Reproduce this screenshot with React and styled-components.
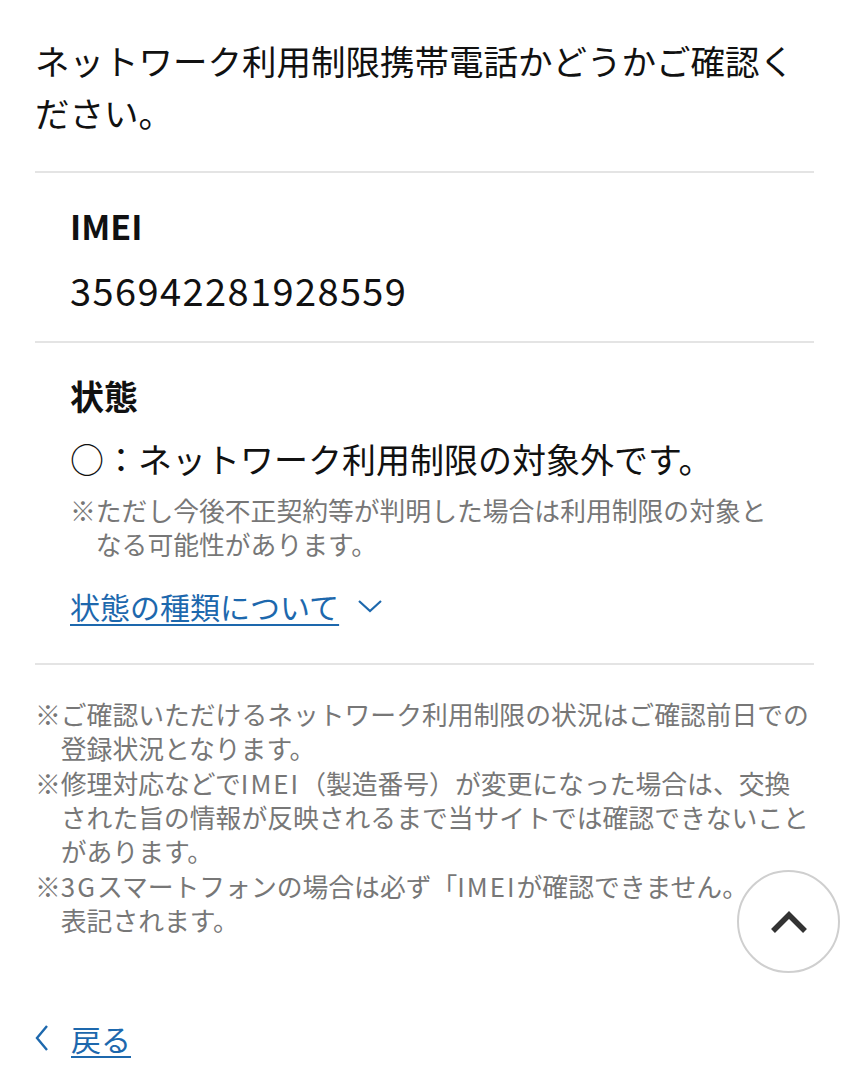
import React from "react";
import styled, { createGlobalStyle } from "styled-components";

const GlobalStyle = createGlobalStyle`
  body {
    margin: 0;
    background: #fff;
    font-family: "Noto Sans CJK JP", "Noto Sans", sans-serif;
    color: #111;
  }
`;

const Page = styled.div`
  padding: 0 35px 60px;
`;

const Intro = styled.p`
  margin: 0;
  padding: 34px 0 33px;
  font-size: 34.5px;
  line-height: 52px;
  border-bottom: 2px solid #e4e4e4;
`;

const Section = styled.section`
  padding: ${(p) => p.$pad || "28px 35px 26px"};
  border-bottom: 2px solid #e4e4e4;
`;

const Label = styled.h2`
  margin: 0;
  font-size: 34px;
  line-height: 50px;
  font-weight: 700;
`;

const Value = styled.div`
  margin-top: ${(p) => p.$gap || "14px"};
  font-size: ${(p) => p.$size || "34px"};
  line-height: 50px;
  letter-spacing: ${(p) => p.$spacing || "0"};
`;

const Note = styled.p`
  margin: ${(p) => p.$margin || "0"};
  padding-left: 1em;
  text-indent: -1em;
  font-size: 25.8px;
  line-height: 34.4px;
  color: #777;
`;

const Latin = styled.span`
  letter-spacing: 2px;
`;

const LinkRow = styled.div`
  margin-top: ${(p) => p.$gap || "0"};
  display: flex;
  align-items: center;
  gap: ${(p) => p.$iconGap || "18px"};
  height: 44px;
  color: #1d68ad;
  font-size: 30px;
`;

const TextLink = styled.a`
  color: inherit;
  text-decoration: underline;
  text-decoration-thickness: 2px;
  text-underline-offset: 5px;
  line-height: 44px;
`;

const Notes = styled.div`
  padding-top: 32px;
`;

const BackRow = styled(LinkRow)`
  margin-top: 78px;
`;

const TopButton = styled.button`
  position: fixed;
  right: 9px;
  bottom: 107px;
  width: 103px;
  height: 103px;
  border-radius: 50%;
  border: 2px solid #cfcfcf;
  background: #fff;
  display: flex;
  align-items: center;
  justify-content: center;
  padding: 0;
  cursor: pointer;
`;

function ChevronDown() {
  return (
    <svg width="26" height="16" viewBox="0 0 26 16" fill="none">
      <path d="M2 3 L13 13 L24 3" stroke="#1d68ad" strokeWidth="2.2" />
    </svg>
  );
}

function ChevronLeft() {
  return (
    <svg width="14" height="28" viewBox="0 0 14 28" fill="none">
      <path d="M12 2 L2 14 L12 26" stroke="#1d68ad" strokeWidth="2.4" />
    </svg>
  );
}

function ChevronUp() {
  return (
    <svg width="40" height="26" viewBox="0 0 40 26" fill="none">
      <path d="M4 22 L20 6 L36 22" stroke="#333" strokeWidth="5.5" />
    </svg>
  );
}

export default function App() {
  return (
    <>
      <GlobalStyle />
      <Page>
        <Intro>ネットワーク利用制限携帯電話かどうかご確認ください。</Intro>

        <Section>
          <Label>IMEI</Label>
          <Value $size="38px" $spacing="1.4px">356942281928559</Value>
        </Section>

        <Section $pad="28px 35px 35px">
          <Label>状態</Label>
          <Value $gap="13px">○：ネットワーク利用制限の対象外です。</Value>
          <Note $margin="9px 0 0">
            ※ただし今後不正契約等が判明した場合は利用制限の対象となる可能性があります。
          </Note>
          <LinkRow $gap="22px">
            <TextLink href="#">状態の種類について</TextLink>
            <ChevronDown />
          </LinkRow>
        </Section>

        <Notes>
          <Note>※ご確認いただけるネットワーク利用制限の状況はご確認前日での登録状況となります。</Note>
          <Note>
            ※修理対応などで<Latin>IMEI</Latin>（製造番号）が変更になった場合は、交換された旨の情報が反映されるまで当サイトでは確認できないことがあります。
          </Note>
          <Note>
            ※<Latin>3G</Latin>スマートフォンの場合は必ず「<Latin>IMEI</Latin>が確認できません。
            <br />
            表記されます。
          </Note>
        </Notes>

        <BackRow $iconGap="22px">
          <ChevronLeft />
          <TextLink href="#">戻る</TextLink>
        </BackRow>
      </Page>
      <TopButton aria-label="ページトップへ">
        <ChevronUp />
      </TopButton>
    </>
  );
}
